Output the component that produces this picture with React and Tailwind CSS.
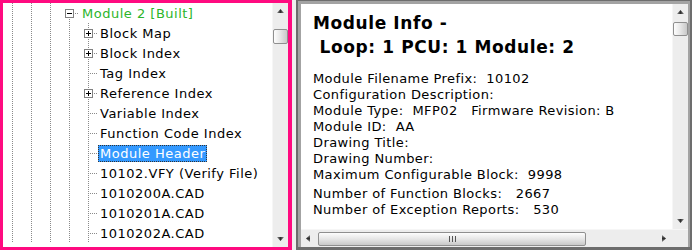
import React from 'react'

const DOT = '#8a8a8a'

// one 19px tree connector cell, drawn as svg
function Conn({ v = 'full', h = false, box = false, open = false }) {
  return (
    <svg width="19" height="20" className="block shrink-0" shapeRendering="crispEdges">
      {v === 'full' && <line x1="9.5" y1="0" x2="9.5" y2="20" stroke={DOT} strokeDasharray="1 1" />}
      {v === 'below' && <line x1="9.5" y1="16" x2="9.5" y2="20" stroke={DOT} strokeDasharray="1 1" />}
      {h && <line x1={box ? 15 : 11} y1="10.5" x2="19" y2="10.5" stroke={DOT} strokeDasharray="1 1" />}
      {box && (
        <>
          <rect x="5.5" y="6.5" width="8" height="8" fill="#fff" stroke="#808080" />
          <line x1="7" y1="10.5" x2="12" y2="10.5" stroke="#000" />
          {!open && <line x1="9.5" y1="8" x2="9.5" y2="13" stroke="#000" />}
        </>
      )}
    </svg>
  )
}

const children = [
  { label: 'Block Map', box: true },
  { label: 'Block Index', box: true },
  { label: 'Tag Index' },
  { label: 'Reference Index', box: true },
  { label: 'Variable Index' },
  { label: 'Function Code Index' },
  { label: 'Module Header', selected: true },
  { label: '10102.VFY (Verify File)' },
  { label: '1010200A.CAD' },
  { label: '1010201A.CAD' },
  { label: '1010202A.CAD' },
]

function Arrow({ dir }) {
  const d = {
    up: 'M0 4 L3.5 0 L7 4 Z',
    down: 'M0 0 L7 0 L3.5 4 Z',
    left: 'M4 0 L4 7 L0 3.5 Z',
    right: 'M0 0 L0 7 L4 3.5 Z',
  }[dir]
  const vert = dir === 'up' || dir === 'down'
  return (
    <svg width={vert ? 7 : 4} height={vert ? 4 : 7} className="block">
      <defs>
        <linearGradient id={'g' + dir} x1="0" y1="0" x2={vert ? 1 : 0} y2={vert ? 0 : 1}>
          <stop offset="0" stopColor="#8a8a8a" />
          <stop offset="0.5" stopColor="#2e2e2e" />
          <stop offset="1" stopColor="#8a8a8a" />
        </linearGradient>
      </defs>
      <path d={d} fill={`url(#g${dir})`} />
    </svg>
  )
}

function VScroll({ thumbTop, thumbH }) {
  return (
    <div className="w-[16px] shrink-0 flex flex-col bg-[#ededed] border-l border-[#f6f6f6]">
      <div className="h-[16px] flex items-center justify-center"><Arrow dir="up" /></div>
      <div className="flex-1 flex flex-col items-center">
        <div
          className="w-[15px] rounded-[2px] border border-[#8f8f8f] bg-gradient-to-r from-[#fdfdfd] via-[#e6e6e6] to-[#c9c9c9]"
          style={{ marginTop: thumbTop, height: thumbH }}
        />
      </div>
      <div className="h-[16px] flex items-center justify-center"><Arrow dir="down" /></div>
    </div>
  )
}

function Tree() {
  return (
    <div className="flex-1 overflow-hidden font-['DejaVu_Sans',sans-serif] text-[13px] tracking-[0.5px] text-black">
      <div className="flex h-[20px] items-center">
        <Conn /><Conn /><Conn />
        <Conn v="below" h box open />
        <span className="ml-[1px] px-[2px] leading-[17px] text-[#2bb52b] whitespace-nowrap">Module 2 [Built]</span>
      </div>
      {children.map((c) => (
        <div key={c.label} className="flex h-[20px] items-center">
          <Conn /><Conn /><Conn /><Conn />
          <Conn h box={c.box} />
          <span
            className={`px-[2px] h-[17px] leading-[17px] whitespace-nowrap ${
              c.selected ? 'bg-[#3399ff] text-white outline outline-1 outline-dotted outline-[#333] -outline-offset-1' : ''
            }`}
          >
            {c.label}
          </span>
        </div>
      ))}
    </div>
  )
}

const info = [
  'Module Filename Prefix:  10102',
  'Configuration Description:',
  'Module Type:  MFP02   Firmware Revision: B',
  'Module ID:  AA',
  'Drawing Title:',
  'Drawing Number:',
  'Maximum Configurable Block:  9998',
]

export default function App() {
  return (
    <div className="w-[692px] h-[250px] flex bg-[#f0f0f0] overflow-hidden">
      {/* tree panel */}
      <div className="w-[292px] h-[250px] shrink-0 flex border-[3px] border-r-[4px] border-[#ff0a80] bg-white">
        <Tree />
        <VScroll thumbTop={10} thumbH={15} />
      </div>

      {/* info panel */}
      <div className="ml-[4px] flex-1 flex border-[#6d6d6d] border-t border-l-2 border-r-2 border-b-[3px]">
        <div className="flex-1 flex flex-col border-[#a3a3a3] border-t-[3px] border-l-[3px] border-r-2">
          <div className="flex-1 flex min-h-0">
            <div className="flex-1 bg-white pl-[12px] pt-[7px] font-['DejaVu_Sans',sans-serif] text-black whitespace-pre overflow-hidden">
              <div className="text-[17px] font-bold leading-[24px] tracking-[0.6px]">Module Info -</div>
              <div className="text-[17px] font-bold leading-[24px] tracking-[0.6px]"> Loop: 1 PCU: 1 Module: 2</div>
              <div className="mt-[12px] text-[13px] leading-[16px] tracking-[0.4px]">
                {info.map((l) => <div key={l}>{l}</div>)}
                <div className="mt-[3px]">Number of Function Blocks:   2667</div>
                <div>Number of Exception Reports:   530</div>
              </div>
            </div>
            <VScroll thumbTop={2} thumbH={14} />
          </div>
          <div className="h-[18px] flex bg-[#ededed] border-t border-[#f6f6f6]">
            <div className="w-[14px] flex items-center justify-center"><Arrow dir="left" /></div>
            <div className="flex-1 flex items-center">
              <div className="ml-[3px] w-[268px] h-[14px] rounded-[2px] border border-[#8f8f8f] bg-gradient-to-b from-[#fdfdfd] via-[#e6e6e6] to-[#c9c9c9] flex items-center justify-center gap-[2px]">
                <span className="w-px h-[6px] bg-[#555]" />
                <span className="w-px h-[6px] bg-[#555]" />
                <span className="w-px h-[6px] bg-[#555]" />
              </div>
            </div>
            <div className="w-[16px] flex items-center justify-center"><Arrow dir="right" /></div>
            <div className="w-[16px] bg-[#ededed]" />
          </div>
        </div>
      </div>
    </div>
  )
}
